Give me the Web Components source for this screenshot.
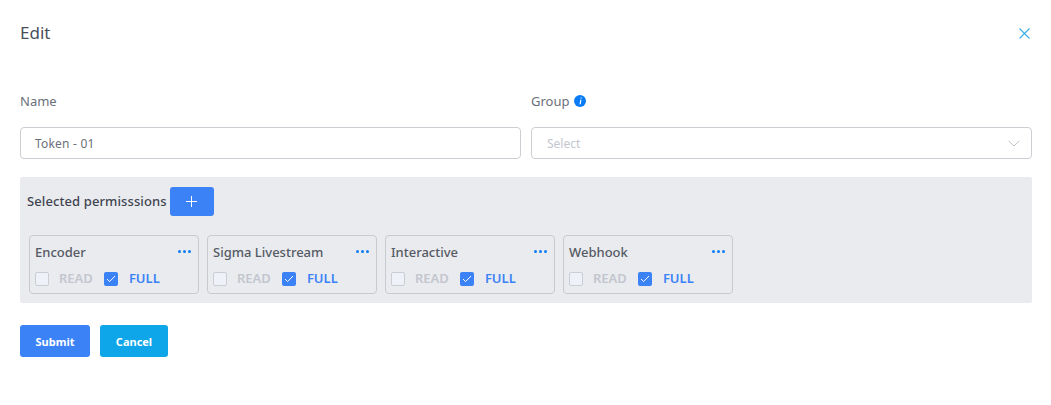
<!DOCTYPE html>
<html>
<head>
<meta charset="utf-8">
<style>
  html, body { background: #fff; margin: 0; }
  body { font-family: 'Noto Sans', sans-serif; }
</style>
</head>
<body>
<edit-dialog>
  <form-field slot="fields" label="Name"><text-box value="Token - 01"></text-box></form-field>
  <form-field slot="fields" label="Group" info><select-box placeholder="Select"></select-box></form-field>
  <permission-panel slot="panel">
    <permission-card name="Encoder"></permission-card>
    <permission-card name="Sigma Livestream"></permission-card>
    <permission-card name="Interactive"></permission-card>
    <permission-card name="Webhook"></permission-card>
  </permission-panel>
</edit-dialog>
<script>
class EditDialog extends HTMLElement {
  constructor() {
    super();
    this.attachShadow( {mode: 'open'} ).innerHTML = `
      <style>
        :host { box-sizing: border-box; display: block; height: 405px; padding: 0 19px 0 20px; }
        header { align-items: center; display: flex; height: 66px; justify-content: space-between; }
        h1 { color: #4a4e59; font-size: 17px; font-weight: 400; margin: -2px 0 0 0; }
        svg { display: block; margin-right: 2px; }
        .fields { column-gap: 10px; display: grid; grid-template-columns: 1fr 1fr; padding: 17px 0 18px 0; }
        .actions { display: flex; gap: 10px; padding-top: 22px; }
        button { border: 0; border-radius: 3px; color: #fff; font: 700 11px 'Noto Sans', sans-serif; height: 32px; padding: 0; }
        .submit { background: #3b82f6; width: 70px; }
        .cancel { background: #0ea5e9; width: 68px; }
      </style>
      <header>
        <h1>Edit</h1>
        <svg width="11" height="11" viewBox="0 0 11 11" fill="none" stroke="#38aee8" stroke-width="1.1"><path d="M.5.5l10 10M10.5.5l-10 10"/></svg>
      </header>
      <div class="fields"><slot name="fields"></slot></div>
      <slot name="panel"></slot>
      <div class="actions">
        <button class="submit">Submit</button>
        <button class="cancel">Cancel</button>
      </div>
    `;
  }
}

class FormField extends HTMLElement {
  constructor() {
    super();
    this.attachShadow( {mode: 'open'} ).innerHTML = `
      <style>
        :host { display: block; }
        label { align-items: center; color: #6b6f7a; display: flex; font-size: 13px; gap: 5px; height: 35px; margin-bottom: 9px; }
        svg { display: block; }
      </style>
      <label><span></span></label>
      <slot></slot>
    `;
    this.shadowRoot.querySelector( 'span' ).textContent = this.getAttribute( 'label' );
    if( this.hasAttribute( 'info' ) ) {
      this.shadowRoot.querySelector( 'label' ).insertAdjacentHTML( 'beforeend', `
        <svg width="12" height="12" viewBox="0 0 12 12"><circle cx="6" cy="6" r="6" fill="#0b7cf5"/><path d="M6.7 2.4h1.1v1.2H6.5zM6.2 4.8h1.2L6.8 9.2H5.6z" fill="#fff"/></svg>
      ` );
    }
  }
}

class TextBox extends HTMLElement {
  constructor() {
    super();
    this.attachShadow( {mode: 'open'} ).innerHTML = `
      <style>
        :host { align-items: center; background: #fff; border: 1px solid #ccced3; border-radius: 4px; box-sizing: border-box; color: #6b6f7a; display: flex; font-size: 12px; height: 32px; letter-spacing: .2px; padding-left: 14px; }
      </style>
      <span></span>
    `;
    this.shadowRoot.querySelector( 'span' ).textContent = this.getAttribute( 'value' );
  }
}

class SelectBox extends HTMLElement {
  constructor() {
    super();
    this.attachShadow( {mode: 'open'} ).innerHTML = `
      <style>
        :host { align-items: center; background: #fff; border: 1px solid #ccced3; border-radius: 4px; box-sizing: border-box; color: #c3c6ce; display: flex; font-size: 12px; height: 32px; justify-content: space-between; padding: 0 11px 0 15px; }
      </style>
      <span></span>
      <svg width="12" height="7" viewBox="0 0 12 7" fill="none" stroke="#bfc2c9" stroke-width="1"><path d="M.6.8L6 6l5.4-5.2"/></svg>
    `;
    this.shadowRoot.querySelector( 'span' ).textContent = this.getAttribute( 'placeholder' );
  }
}

class PermissionPanel extends HTMLElement {
  constructor() {
    super();
    this.attachShadow( {mode: 'open'} ).innerHTML = `
      <style>
        :host { background: #e9ebef; border-radius: 2px; box-sizing: border-box; display: block; height: 126px; padding: 10px 9px 0 9px; }
        .head { align-items: center; display: flex; gap: 3px; height: 29px; margin-bottom: 19px; }
        b { color: #3f4450; font-size: 13px; font-weight: 500; letter-spacing: .1px; margin: -1px 0 0 -2px; }
        button { align-items: center; background: #3b82f6; border: 0; border-radius: 3px; display: flex; height: 29px; justify-content: center; padding: 0; width: 44px; }
        .cards { display: flex; gap: 8px; }
      </style>
      <div class="head">
        <b>Selected permisssions</b>
        <button><svg width="11" height="11" viewBox="0 0 11 11" stroke="#fff" stroke-width="1"><path d="M5.5 0v11M0 5.5h11"/></svg></button>
      </div>
      <div class="cards"><slot></slot></div>
    `;
  }
}

class PermissionCard extends HTMLElement {
  constructor() {
    super();
    this.attachShadow( {mode: 'open'} ).innerHTML = `
      <style>
        :host { border: 1px solid #c8cacf; border-radius: 4px; box-sizing: border-box; display: block; height: 59px; padding: 0 4px 0 5px; width: 170px; }
        .top { align-items: center; display: flex; height: 31px; justify-content: space-between; }
        .name { color: #565a64; font-size: 13px; font-weight: 500; }
        .dots { display: block; margin-right: 3px; }
        .row { align-items: center; display: flex; font-size: 13px; font-weight: 600; height: 20px; margin-top: 2px; }
        .box { border-radius: 2px; box-sizing: border-box; flex: none; height: 14px; width: 14px; }
        .off { background: #eef1f8; border: 1px solid #ccced5; }
        .on { background: #3b82f6; display: flex; align-items: center; justify-content: center; }
        .read { color: #c3c6ce; margin: -2px 11px 0 10px; }
        .full { color: #3b82f6; margin: -2px 0 0 11px; }
      </style>
      <div class="top">
        <span class="name"></span>
        <svg class="dots" width="13" height="3" viewBox="0 0 13 3" fill="#0b7cf5"><circle cx="1.5" cy="1.5" r="1.5"/><circle cx="6.5" cy="1.5" r="1.5"/><circle cx="11.5" cy="1.5" r="1.5"/></svg>
      </div>
      <div class="row">
        <span class="box off"></span><span class="read">READ</span>
        <span class="box on"><svg width="10" height="8" viewBox="0 0 10 8" fill="none" stroke="#fff" stroke-width="1"><path d="M1 4l2.6 2.6L9 1"/></svg></span><span class="full">FULL</span>
      </div>
    `;
    this.shadowRoot.querySelector( '.name' ).textContent = this.getAttribute( 'name' );
  }
}

window.customElements.define( 'edit-dialog', EditDialog );
window.customElements.define( 'form-field', FormField );
window.customElements.define( 'text-box', TextBox );
window.customElements.define( 'select-box', SelectBox );
window.customElements.define( 'permission-panel', PermissionPanel );
window.customElements.define( 'permission-card', PermissionCard );
</script>
</body>
</html>
